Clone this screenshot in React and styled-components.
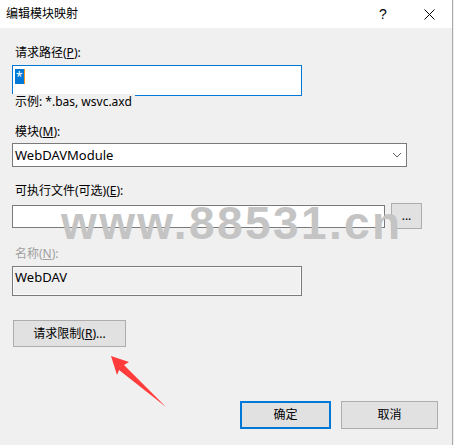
import React from "react"
import styled, { createGlobalStyle } from "styled-components"

const Global = createGlobalStyle`
  html, body {
    margin: 0;
    padding: 0;
    background: #f0f0f0;
  }
  body {
    font-family: "Noto Sans", "Noto Sans CJK SC", sans-serif;
    font-size: 12px;
    color: #000;
  }
`

const Dialog = styled.div`
  position: relative;
  width: 452px;
  height: 445px;
  border-right: 1px solid #a9a9a9;
  background: #f0f0f0;
  overflow: hidden;
`

const TitleBar = styled.div`
  display: flex;
  align-items: center;
  height: 28px;
  background: #fff;
  padding-left: 6px;
`

const TitleText = styled.div`
  flex: 1;
  font-size: 12px;
  line-height: 16px;
`

const CaptionButton = styled.div`
  width: 46px;
  height: 28px;
  display: flex;
  align-items: center;
  justify-content: center;
  font-size: 14px;
  font-family: "Liberation Sans", sans-serif;
  color: #000;
`

const Body = styled.div`
  display: flex;
  flex-direction: column;
  align-items: flex-start;
  padding: 0 14px 0 12px;
`

const Label = styled.div`
  margin-top: ${p => p.$top}px;
  padding-left: 3px;
  line-height: 16px;
  height: 16px;
  color: ${p => (p.$disabled ? "#a0a0a0" : "#000")};
  u {
    text-underline-offset: 1px;
  }
`

const Hint = styled.div`
  position: relative;
  margin-top: -2px;
  padding: 0 3px;
  line-height: 16px;
  height: 16px;
  background: #f0f0f0;
`

const TextBox = styled.div`
  box-sizing: border-box;
  width: ${p => p.$w}px;
  height: ${p => p.$h}px;
  margin-top: ${p => p.$top || 0}px;
  border: 1px solid ${p => (p.$focus ? "#0078d7" : "#7a7a7a")};
  background: ${p => (p.$readonly ? "#f0f0f0" : "#fff")};
  box-shadow: ${p => (p.$readonly ? "inset 0 0 0 1px #fafafa" : "none")};
  padding: 3px 2px;
  font-size: 13px;
  line-height: 15px;
`

const Selected = styled.span`
  display: inline-block;
  background: #0078d7;
  color: #fff;
  height: 15px;
  font-size: 12px;
  padding: 0 1px;
  border-right: 1px solid #f7931e;
`

const Select = styled.div`
  box-sizing: border-box;
  display: flex;
  align-items: center;
  justify-content: space-between;
  width: 395px;
  height: 24px;
  margin-top: 3px;
  border: 1px solid #7a7a7a;
  background: #fff;
  padding: 0 4px 0 2px;
  font-size: 13px;
`

const Row = styled.div`
  display: flex;
  align-items: center;
  gap: 6px;
  margin-top: 4px;
`

const Button = styled.div`
  box-sizing: border-box;
  display: flex;
  align-items: center;
  justify-content: center;
  width: ${p => p.$w}px;
  height: ${p => p.$h}px;
  margin-top: ${p => p.$top || 0}px;
  margin-left: ${p => p.$left || 0}px;
  background: #e1e1e1;
  border: ${p => (p.$default ? "2px solid #0078d7" : "1px solid #adadad")};
  line-height: 16px;
`

const Footer = styled.div`
  display: flex;
  justify-content: flex-end;
  gap: 10px;
  align-self: stretch;
  margin-top: 54px;
`

const Watermark = styled.div`
  position: absolute;
  left: 61px;
  top: 200px;
  font-family: "Liberation Sans", Arial, sans-serif;
  font-weight: bold;
  font-size: 46px;
  line-height: 46px;
  letter-spacing: 2.4px;
  color: #c4c4c4;
  pointer-events: none;
  white-space: nowrap;
`

const Overlay = styled.svg`
  position: absolute;
  left: 0;
  top: 0;
  pointer-events: none;
`

const Chevron = () => (
  <svg width="10" height="6" viewBox="0 0 10 6">
    <path d="M1 1 L5 5 L9 1" fill="none" stroke="#606060" strokeWidth="1" />
  </svg>
)

const CloseIcon = () => (
  <svg width="11" height="11" viewBox="0 0 11 11">
    <path d="M0.5 0.5 L10.5 10.5 M10.5 0.5 L0.5 10.5" stroke="#000" strokeWidth="1" />
  </svg>
)

export default function App() {
  return (
    <>
      <Global />
      <Dialog>
        <TitleBar>
          <TitleText>编辑模块映射</TitleText>
          <CaptionButton>?</CaptionButton>
          <CaptionButton>
            <CloseIcon />
          </CaptionButton>
        </TitleBar>
        <Body>
          <Label $top={17}>
            请求路径(<u>P</u>):
          </Label>
          <TextBox $w={290} $h={31} $top={4} $focus>
            <Selected>*</Selected>
          </TextBox>
          <Hint>示例: *.bas, wsvc.axd</Hint>

          <Label $top={14}>
            模块(<u>M</u>):
          </Label>
          <Select>
            <span>WebDAVModule</span>
            <Chevron />
          </Select>

          <Label $top={16}>
            可执行文件(可选)(<u>E</u>):
          </Label>
          <Row>
            <TextBox $w={373} $h={23} />
            <Button $w={31} $h={26}>...</Button>
          </Row>

          <Label $top={17} $disabled>
            名称(<u>N</u>):
          </Label>
          <TextBox $w={290} $h={30} $top={4} $readonly>
            WebDAV
          </TextBox>

          <Button $w={113} $h={27} $top={24} $left={1}>
            请求限制(<u>R</u>)...
          </Button>

          <Footer>
            <Button $w={91} $h={28} $default>确定</Button>
            <Button $w={97} $h={28}>取消</Button>
          </Footer>
        </Body>

        <Watermark>www.88531.cn</Watermark>
        <Overlay width="454" height="445">
          <polygon
            points="111,356 129,362 124,365 166,407 119,370 117,375"
            fill="#ff3b3b"
          />
        </Overlay>
      </Dialog>
    </>
  )
}
